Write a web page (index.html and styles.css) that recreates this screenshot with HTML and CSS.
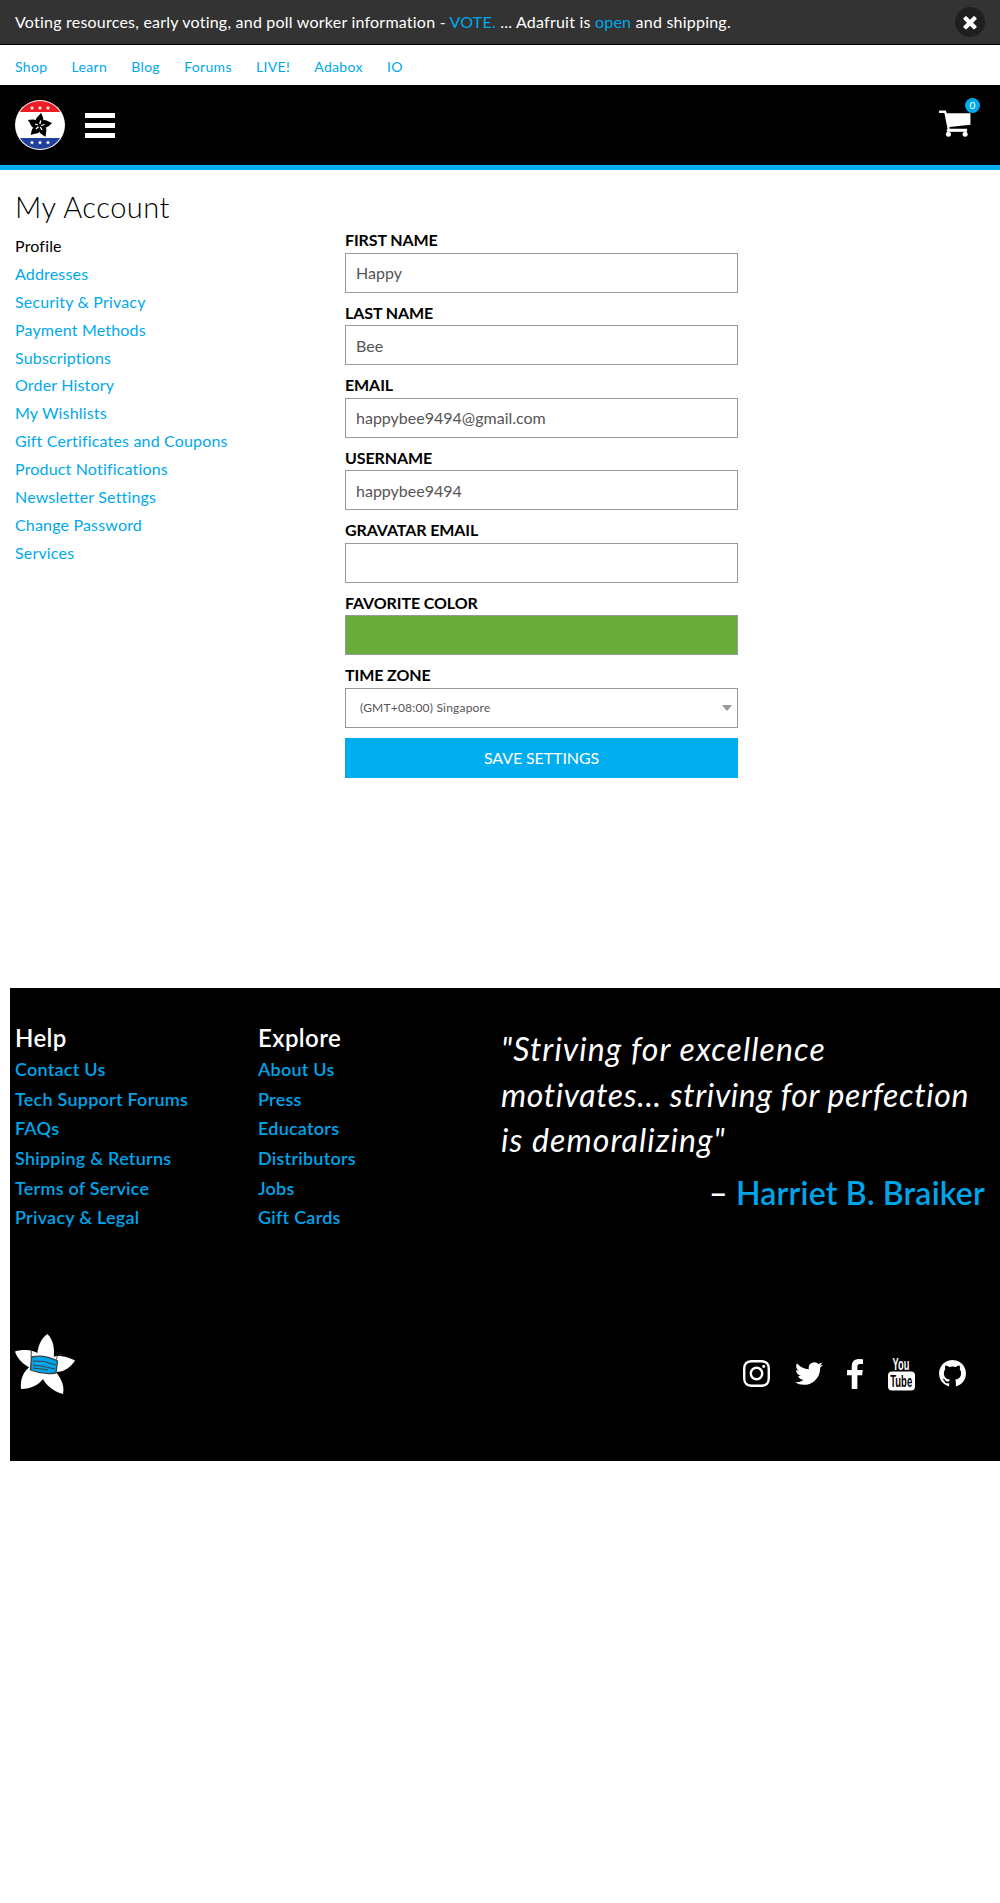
FILE: index.html
```html
<!DOCTYPE html>
<html lang="en">
<head>
<meta charset="utf-8">
<title>My Account</title>
<link rel="stylesheet" href="styles.css">
</head>
<body>
<div class="notice">
  <p class="notice-text">Voting resources, early voting, and poll worker information - <a href="#">VOTE.</a> ... Adafruit is <a href="#">open</a> and shipping.</p>
  <button class="notice-close" aria-label="Close"><svg width="20" height="20" viewBox="0 0 1792 1792" fill="#fff"><path d="M1490 1322q0 40-28 68l-136 136q-28 28-68 28t-68-28l-294-294-294 294q-28 28-68 28t-68-28l-136-136q-28-28-28-68t28-68l294-294-294-294q-28-28-28-68t28-68l136-136q28-28 68-28t68 28l294 294 294-294q28-28 68-28t68 28l136 136q28 28 28 68t-28 68l-294 294 294 294q28 28 28 68z"/></svg></button>
</div>
<nav class="sites">
  <a href="#">Shop</a><a href="#">Learn</a><a href="#">Blog</a><a href="#">Forums</a><a href="#">LIVE!</a><a href="#">Adabox</a><a href="#">IO</a>
</nav>
<header class="header">
  <svg class="logo" width="50" height="50" viewBox="0 0 50 50">
    <defs>
      <clipPath id="disc"><circle cx="25" cy="25" r="24"/></clipPath>
      <path id="star" d="M0-2.200 .6-.7 2.200-.6 1 .4 1.400 1.900 0 1-1.400 1.900-1 .4-2.200-.6-.6-.7Z" fill="#fff"/>
      <path id="petal" d="M0 0C-3-2-4.500-4-3.600-6.500-2.500-9 0-10 1.500-12.800 2.500-10 4.500-8 3.600-4.500L2.500-2Z"/>
    </defs>
    <circle cx="25" cy="25" r="25" fill="#fff"/>
    <g clip-path="url(#disc)"><path fill="#ed1c24" d="M0 0h50v12H0z"/><path fill="#21409a" d="M0 38h50v12H0z"/></g>
    <use href="#star" x="17" y="8"/><use href="#star" x="25" y="8"/><use href="#star" x="33" y="8"/>
    <use href="#star" x="17" y="42.500"/><use href="#star" x="25" y="42.500"/><use href="#star" x="33" y="42.500"/>
    <g transform="translate(24.500 25.500)">
      <use href="#petal"/><use href="#petal" transform="rotate(72)"/><use href="#petal" transform="rotate(144)"/><use href="#petal" transform="rotate(216)"/><use href="#petal" transform="rotate(288)"/>
      <path stroke="#fff" stroke-width="1.300" d="M.3-1.500 1.200-5M1.500 0 5-1M.8 1.500 2.500 4.500M-1 1.200-3.500 3.500M-1.500-.5-4.500-1.500"/>
    </g>
  </svg>
  <button class="menu" aria-label="Menu"><span></span><span></span><span></span></button>
  <a class="cart" href="#" aria-label="Cart">
    <svg width="32" height="28" viewBox="0 0 33 29" fill="#fff"><path d="M0 .5h7L8 3.300h24.500v12L10.800 17.500v2H29v1.200H9L5.500 3H0Z"/><path d="M8 20h21v2.600H8z"/><circle cx="9.700" cy="25.200" r="2.600"/><circle cx="27" cy="25.200" r="2.600"/></svg>
    <span class="badge">0</span>
  </a>
</header>
<main class="account">
  <aside class="side">
    <h1>My Account</h1>
    <ul>
      <li>Profile</li>
      <li><a href="#">Addresses</a></li>
      <li><a href="#">Security &amp; Privacy</a></li>
      <li><a href="#">Payment Methods</a></li>
      <li><a href="#">Subscriptions</a></li>
      <li><a href="#">Order History</a></li>
      <li><a href="#">My Wishlists</a></li>
      <li><a href="#">Gift Certificates and Coupons</a></li>
      <li><a href="#">Product Notifications</a></li>
      <li><a href="#">Newsletter Settings</a></li>
      <li><a href="#">Change Password</a></li>
      <li><a href="#">Services</a></li>
    </ul>
  </aside>
  <form class="profile">
    <label for="first">FIRST NAME</label><input id="first" value="Happy">
    <label for="last">LAST NAME</label><input id="last" value="Bee">
    <label for="email">EMAIL</label><input id="email" value="happybee9494@gmail.com">
    <label for="user">USERNAME</label><input id="user" value="happybee9494">
    <label for="gravatar">GRAVATAR EMAIL</label><input id="gravatar" value="">
    <label for="color">FAVORITE COLOR</label><input id="color" class="color" value="">
    <label>TIME ZONE</label>
    <div class="select"><span>(GMT+08:00) Singapore</span><svg width="10" height="6" viewBox="0 0 10 6"><path d="M0 0h10L5.500 5.500h-1z" fill="#999"/></svg></div>
    <button class="save" type="button">SAVE SETTINGS</button>
  </form>
</main>
<footer class="footer">
  <div class="footer-top">
    <section class="links">
      <h2>Help</h2>
      <a href="#">Contact Us</a><a href="#">Tech Support Forums</a><a href="#">FAQs</a><a href="#">Shipping &amp; Returns</a><a href="#">Terms of Service</a><a href="#">Privacy &amp; Legal</a>
    </section>
    <section class="links">
      <h2>Explore</h2>
      <a href="#">About Us</a><a href="#">Press</a><a href="#">Educators</a><a href="#">Distributors</a><a href="#">Jobs</a><a href="#">Gift Cards</a>
    </section>
    <blockquote class="quote">
      <p><span class="loose">"Striving for excellence</span><br>motivates... striving for perfection<br><span class="loose">is demoralizing"</span></p>
      <cite>– <a href="#">Harriet B. Braiker</a></cite>
    </blockquote>
  </div>
  <div class="footer-bottom">
    <svg width="60" height="60" viewBox="0 0 60 60">
      <g fill="#fff">
        <path d="M22 24C22 13 26 4 32.500 0 38 6 40 13 38.500 25L30 30Z"/>
        <path d="M34 25C40 19 54 23 60 26.500 56 33 49 39 38 38L30 30Z"/>
        <path d="M38 34C45 43 50 50 48 60 37 57 28 49 26 40L30 30Z"/>
        <path d="M31 38C29 49 17 55 6 55 5 46 8 37 16 32L30 30Z"/>
        <path d="M16 34C8 31 2 24 0 17.500 8 15 22 15 27 24L30 30Z"/>
      </g>
      <path fill="none" stroke="#414042" d="M16 23 16.500 16M41 26C42 22 44 20 47 21"/>
      <path fill="#00a4e8" stroke="#414042" stroke-width="1.300" d="M16.500 23Q29 20 42.500 27L41 39Q28 41 15.500 36Z"/>
      <path fill="none" stroke="#414042" stroke-width="1" d="M18 27Q29 26 41 31M18 31Q28 32 40 35M18 34Q28 35 33 36"/>
    </svg>
    <div class="social">
      <svg width="27" height="27" viewBox="128 128 1536 1536"><path d="M1152 896q0-106-75-181t-181-75-181 75-75 181 75 181 181 75 181-75 75-181zm138 0q0 164-115 279t-279 115-279-115-115-279 115-279 279-115 279 115 115 279zm108-410q0 38-27 65t-65 27-65-27-27-65 27-65 65-27 65 27 27 65zm-502-220q-7 0-76.500-.5t-105.500 0-96.500 3-103 10-71.500 18.500q-50 20-88 58t-58 88q-11 29-18.500 71.500t-10 103-3 96.500 0 105.500.5 76.500-.5 76.500 0 105.500 3 96.500 10 103 18.500 71.500q20 50 58 88t88 58q29 11 71.500 18.500t103 10 96.500 3 105.500 0 76.500-.5 76.500.5 105.500 0 96.500-3 103-10 71.500-18.500q50-20 88-58t58-88q11-29 18.500-71.500t10-103 3-96.500 0-105.500-.5-76.500.5-76.500 0-105.500-3-96.500-10-103-18.500-71.500q-20-50-58-88t-88-58q-29-11-71.500-18.500t-103-10-96.500-3-105.500 0-76.500.5zm768 630q0 229-5 317-10 208-124 322t-322 124q-88 5-317 5t-317-5q-208-10-322-124t-124-322q-5-88-5-317t5-317q10-208 124-322t322-124q88-5 317-5t317 5q208 10 322 124t124 322q5 88 5 317z"/></svg>
      <svg width="28" height="23" viewBox="108 256 1576 1280"><path d="M1684 408q-67 98-162 167 1 14 1 42 0 130-38 259.500t-115.500 248.500-184.500 210.500-258 146-323 54.500q-271 0-496-145 35 4 78 4 225 0 401-138-105-2-188-64.500t-114-159.500q33 5 61 5 43 0 85-11-112-23-185.500-111.500t-73.500-205.500v-4q68 38 146 41-66-44-105-115t-39-154q0-88 44-163 121 149 294.500 238.500t371.500 99.500q-8-38-8-74 0-134 94.500-228.500t228.500-94.500q140 0 236 102 109-21 205-78-37 115-142 178 93-10 186-50z"/></svg>
      <svg width="16" height="30" viewBox="479 0 864 1664" preserveAspectRatio="none"><path d="M1343 12v264h-157q-86 0-116 36t-30 108v189h293l-39 296h-254v759h-306v-759h-255v-296h255v-218q0-186 104-288.500t277-102.500q147 0 228 12z"/></svg>
      <svg class="yt" width="27" height="37" viewBox="0 -4 27 37"><text transform="translate(4.500 12) scale(.58 1)">You</text><rect y="13.500" width="27" height="19" rx="4"/><text class="dark" transform="translate(2.300 29) scale(.59 1)">Tube</text></svg>
      <svg width="27" height="27" viewBox="128 128 1536 1536"><path d="M896 128q209 0 385.500 103t279.500 279.500 103 385.500q0 251-146.500 451.500t-378.500 277.500q-27 5-40-7t-13-30q0-3 .5-76.500t.5-134.500q0-97-52-142 57-6 102.500-18t94-39 81-66.500 53-105 20.500-150.500q0-119-79-206 37-91-8-204-28-9-81 11t-92 44l-38 24q-93-26-192-26t-192 26q-16-11-42.500-27t-83.500-38.500-85-13.500q-45 113-8 204-79 87-79 206 0 85 20.500 150t52.500 105 80.500 67 94 39 102.500 18q-39 36-49 103-21 10-45 15t-57 5-65.500-21.500-55.500-62.500q-19-32-48.500-52t-49.500-24l-20-3q-21 0-29 4.500t-5 11.500 9 14 13 12l7 5q22 10 43.500 38t31.500 51l10 23q13 38 44 61.500t67 30 69.500 7 55.500-3.500l23-4q0 38 .5 88.500t.5 54.500q0 18-13 30t-40 7q-232-77-378.500-277.500t-146.500-451.500q0-209 103-385.500t279.500-279.500 385.500-103z"/></svg>
    </div>
  </div>
</footer>
</body>
</html>
```
FILE: styles.css
```css
* { box-sizing: border-box; }
body { margin: 0; background: #fff; color: #000; font: 16px/28px Lato, "Open Sans", sans-serif; font-variant-ligatures: none; min-height: 1903px; }
a { color: #00a9ec; text-decoration: none; }
button { border: 0; padding: 0; font: inherit; }
h1, h2, p, ul, blockquote { margin: 0; padding: 0; }
ul { list-style: none; }

.notice { display: flex; justify-content: space-between; align-items: center; height: 45px; padding: 0 15px; background: #333; border-bottom: 1px solid #000; color: #fff; }
.notice-text { letter-spacing: .22px; }
.notice-close { display: flex; align-items: center; justify-content: center; width: 30px; height: 30px; border-radius: 50%; background: #1f1f1f; }

.sites { display: flex; align-items: center; gap: 24.300px; height: 40px; padding: 3px 15px 0; font-size: 14px; letter-spacing: .3px; }

.header { display: flex; align-items: center; height: 85px; padding: 0 15px; background: #000; border-bottom: 5px solid #00adef; }
.menu { display: flex; flex-direction: column; gap: 5px; width: 30px; margin-left: 20px; background: none; }
.menu span { height: 5px; background: #fff; }
.cart { position: relative; display: flex; margin: 0 14px 2px auto; }
.badge { position: absolute; left: 26px; top: -12px; width: 15px; height: 15px; border-radius: 50%; background: #00a9ec; color: #fff; font-size: 10px; line-height: 15px; text-align: center; }

.account { display: flex; height: 818px; padding-left: 15px; }
.side { width: 330px; padding-top: 19px; }
.side h1 { font-size: 29px; line-height: 36px; font-weight: 300; letter-spacing: .5px; }
.side ul { padding-top: 7px; letter-spacing: .17px; }
.side li { height: 27.900px; line-height: 28px; }

.profile { display: flex; flex-direction: column; width: 393px; padding-top: 60px; }
.profile label { height: 22.500px; line-height: 20px; font-weight: 700; letter-spacing: -.1px; }
.profile input, .select { width: 100%; height: 40px; margin: 0 0 10px; padding: 0 10px; border: 1px solid #999; border-radius: 0; background: #fff; color: #555; font: inherit; }
.profile .color { background: #69ac3c; }
.select { display: flex; align-items: center; justify-content: space-between; padding: 0 5px 0 14px; }
.select span { font-size: 12px; letter-spacing: .2px; }
.save { height: 40px; background: #00adef; color: #fff; letter-spacing: -.1px; }

.footer { height: 473px; margin-left: 10px; padding: 34px 15px 0 5px; background: #000; color: #fff; }
.footer-top { display: flex; height: 312px; }
.links { display: flex; flex-direction: column; width: 243px; }
.links h2 { font-size: 24px; line-height: 32px; margin-bottom: 1px; font-weight: 600; letter-spacing: .4px; }
.links a { height: 29.700px; line-height: 29px; font-size: 18px; font-weight: 600; letter-spacing: .24px; color: #00a4e8; }
.quote { flex: 1; padding-top: 4px; }
.quote p { font-size: 32px; line-height: 45.500px; font-style: italic; font-weight: 400; letter-spacing: .65px; white-space: nowrap; }
.quote .loose { letter-spacing: 1.1px; }
.quote cite { display: block; padding-top: 7px; text-align: right; font-size: 32px; line-height: 45px; font-style: normal; font-weight: 600; letter-spacing: .2px; white-space: nowrap; }
.quote a { color: #00a4e8; }
.footer-bottom { display: flex; justify-content: space-between; }
.social { display: flex; align-items: center; gap: 24.500px; height: 79px; padding-right: 19px; fill: #fff; }
.yt { overflow: visible; margin-top: -3px; }
.yt text { font: 700 16px "Liberation Sans", sans-serif; letter-spacing: 0; }
.yt .dark { fill: #000; }
```
